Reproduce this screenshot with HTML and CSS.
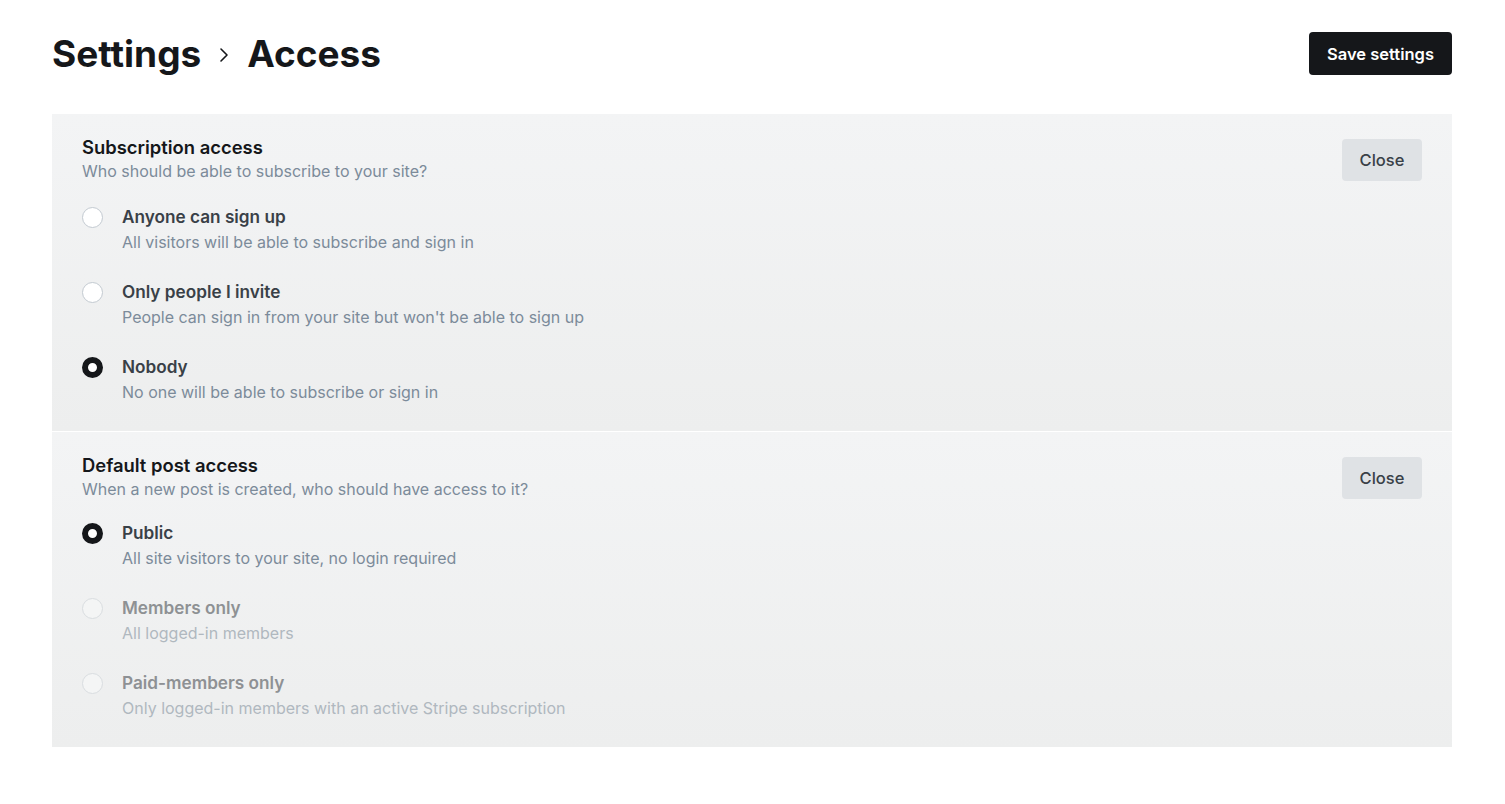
FILE: index.html
```html
<!DOCTYPE html>
<html lang="en">
<head>
<meta charset="utf-8">
<title>Settings › Access</title>
<link rel="stylesheet" href="styles.css">
</head>
<body>
<main class="page">
  <header class="topbar">
    <h1 class="crumbs">
      <span>Settings</span>
      <svg class="chev" viewBox="0 0 12 20" width="12" height="20" aria-hidden="true"><path d="M3 4 L9 10 L3 16" fill="none" stroke="#15171a" stroke-width="1.6" stroke-linecap="round" stroke-linejoin="round"/></svg>
      <span>Access</span>
    </h1>
    <button class="btn-save">Save settings</button>
  </header>

  <section class="panel">
    <div class="panel-head">
      <div>
        <h2 class="panel-title">Subscription access</h2>
        <p class="panel-sub">Who should be able to subscribe to your site?</p>
      </div>
      <button class="btn-close">Close</button>
    </div>
    <ul class="options">
      <li class="option">
        <span class="radio"></span>
        <div><div class="opt-label">Anyone can sign up</div><div class="opt-desc">All visitors will be able to subscribe and sign in</div></div>
      </li>
      <li class="option">
        <span class="radio"></span>
        <div><div class="opt-label">Only people I invite</div><div class="opt-desc">People can sign in from your site but won't be able to sign up</div></div>
      </li>
      <li class="option">
        <span class="radio checked"></span>
        <div><div class="opt-label">Nobody</div><div class="opt-desc">No one will be able to subscribe or sign in</div></div>
      </li>
    </ul>
  </section>

  <section class="panel">
    <div class="panel-head">
      <div>
        <h2 class="panel-title">Default post access</h2>
        <p class="panel-sub">When a new post is created, who should have access to it?</p>
      </div>
      <button class="btn-close">Close</button>
    </div>
    <ul class="options options-tight">
      <li class="option">
        <span class="radio checked"></span>
        <div><div class="opt-label">Public</div><div class="opt-desc">All site visitors to your site, no login required</div></div>
      </li>
      <li class="option disabled">
        <span class="radio"></span>
        <div><div class="opt-label">Members only</div><div class="opt-desc">All logged-in members</div></div>
      </li>
      <li class="option disabled">
        <span class="radio"></span>
        <div><div class="opt-label">Paid-members only</div><div class="opt-desc">Only logged-in members with an active Stripe subscription</div></div>
      </li>
    </ul>
  </section>
</main>
</body>
</html>
```

FILE: styles.css
```css
* { box-sizing: border-box; }
html, body { margin: 0; padding: 0; background: #fff; }
body {
  font-family: Inter, "Noto Sans", "Liberation Sans", sans-serif;
  color: #15171a;
  -webkit-font-smoothing: antialiased;
}
.page { padding: 32px 53px 0 52px; }

.topbar {
  display: flex;
  align-items: center;
  justify-content: space-between;
  margin-bottom: 39px;
}
.crumbs {
  margin: 0;
  display: flex;
  align-items: center;
  gap: 17px;
  font-size: 37px;
  font-weight: 700;
  letter-spacing: 0;
  line-height: 43px;
}
.chev { margin: 2px 0 0 0; }

.btn-save {
  height: 43px;
  padding: 0 18px;
  border: 0;
  border-radius: 4px;
  background: #15171a;
  color: #fff;
  font-family: inherit;
  font-size: 16.5px;
  font-weight: 600;
}

.panel {
  background: linear-gradient(to bottom, #f3f4f5, #edeeee);
  padding: 23px 30px 29px 30px;
}
.panel + .panel { border-top: 1px solid #fff; }

.panel-head {
  display: flex;
  justify-content: space-between;
  align-items: flex-start;
}
.panel-title {
  margin: 0;
  font-size: 18.4px;
  font-weight: 600;
  line-height: 20px;
  color: #15171a;
}
.panel-sub {
  margin: 4px 0 0 0;
  font-size: 16px;
  line-height: 20px;
  color: #7c8b9a;
}
.btn-close {
  margin-top: 2px;
  width: 80px;
  height: 42px;
  border: 0;
  border-radius: 4px;
  background: #dfe2e5;
  color: #394047;
  font-family: inherit;
  font-size: 16.5px;
  font-weight: 500;
}

.options {
  list-style: none;
  margin: 26px 0 0 0;
  padding: 0;
  display: flex;
  flex-direction: column;
  gap: 30px;
}
.options-tight { margin-top: 24px; }
.option {
  display: flex;
  align-items: flex-start;
  gap: 19px;
}
.radio {
  flex: none;
  width: 21px;
  height: 21px;
  border-radius: 50%;
  background: #fff;
  border: 1px solid #c3cad1;
}
.radio.checked {
  border: 6.5px solid #15171a;
}
.opt-label {
  font-size: 17.2px;
  font-weight: 600;
  line-height: 20px;
  color: #394047;
}
.opt-desc {
  margin-top: 5px;
  font-size: 16px;
  line-height: 20px;
  color: #7c8b9a;
}
.option.disabled .opt-label { color: #8e9194; }
.option.disabled .opt-desc { color: #b0b8bf; }
.option.disabled .radio { background: #f4f5f5; border-color: #d9dde0; }
```
